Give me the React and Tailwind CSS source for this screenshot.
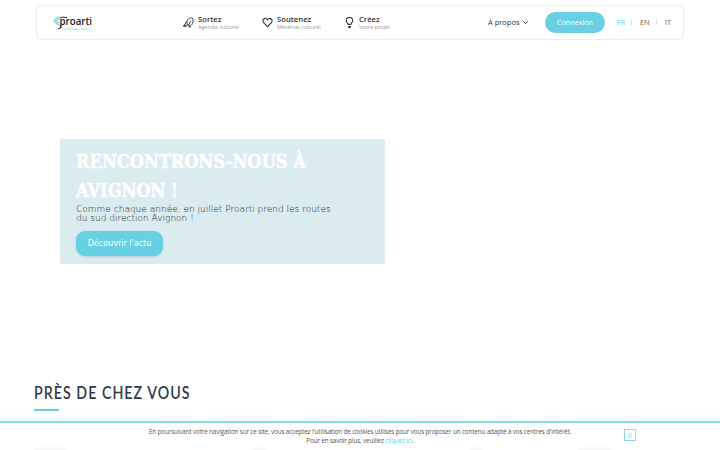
import React from 'react';

const menu = [
    { title: 'Sortez', subtitle: 'Agenda culturel', icon: RocketIcon, width: 'w-[79px]' },
    { title: 'Soutenez', subtitle: 'Mécénat culturel', icon: HeartIcon, width: 'w-[82px]' },
    { title: 'Créez', subtitle: 'Votre projet', icon: BulbIcon, width: 'w-[60px]' },
];

function RocketIcon() {
    return (
        <svg className="mt-[2px] h-[11px] w-[11px] shrink-0" viewBox="0 0 24 24" fill="none" stroke="#333" strokeWidth="2">
            <path d="M9 16C7 8 11 2 20 2c4 5 2 13-4 18l-7-4ZM9 8 1 20l8-3M16 20l-1 3-4-5M12 18l5-10M1 20l7 1" />
        </svg>
    );
}

function HeartIcon() {
    return (
        <svg className="mt-[2px] h-[11px] w-[11px] shrink-0" viewBox="0 0 24 24" fill="none" stroke="#333" strokeWidth="2.5">
            <path d="M12 21 4 13c-6-7 3-14 8-7 5-7 14 0 8 7l-8 8Z" />
        </svg>
    );
}

function BulbIcon() {
    return (
        <svg className="mt-[2px] h-[12px] w-[11px] shrink-0" viewBox="0 0 24 24" fill="none" stroke="#333" strokeWidth="2.3">
            <path d="M9 15c0-3-4-4-4-8a7 7 0 0 1 14 0c0 4-4 5-4 8H9Z" />
            <path d="M9 20h6M10 22h4" strokeWidth="2.5" />
        </svg>
    );
}

function Logo() {
    return (
        <svg className="h-[20px] w-[42px] overflow-visible" viewBox="0 0 42 20">
            <path d="M7 3 2 5 0 8l4 4 3 1-1-4-2-1 3-2Z" fill="#67d0e3" opacity="0.7" />
            <text x="6.500" y="12" fontFamily="Open Sans, sans-serif" fontSize="10.500" fontWeight="600" fill="#222" textLength="32.500" lengthAdjust="spacingAndGlyphs">proarti</text>
            <path d="M7 5Q9 3.500 14 4.500M5 16q3 0 3-4" stroke="#222" strokeWidth="1" fill="none" />
            <text x="9" y="16.500" fontFamily="Open Sans, sans-serif" fontSize="2.700" fill="#67d0e3" textLength="29">l'accélérateur culturel</text>
        </svg>
    );
}

function App() {
    return (
        <div className="flex h-[450px] w-[720px] flex-col overflow-hidden bg-white font-['Open_Sans',sans-serif] text-[#333]">
            <header className="ml-[36px] mt-[5px] flex h-[35px] w-[648px] shrink-0 items-center rounded-[5px] border border-[#ededed]">
                <div className="ml-[16px] w-[130px]"><Logo /></div>
                <nav className="flex w-[305px]">
                    {menu.map(({ title, subtitle, icon: Icon, width }) => (
                        <a key={title} className={`flex shrink-0 gap-[4px] ${width}`}>
                            <Icon />
                            <span className="whitespace-nowrap">
                                <b className="block text-[7.7px] font-semibold leading-[8px]">{title}</b>
                                <span className="block text-[5.6px] leading-[8px] text-[#999]">{subtitle}</span>
                            </span>
                        </a>
                    ))}
                </nav>
                <a className="w-[35px] whitespace-nowrap text-[7.5px]">À propos</a>
                <svg className="mr-[17px] h-[5px] w-[5px]" viewBox="0 0 10 10" fill="none" stroke="#333" strokeWidth="2"><path d="m1 3 4 4 4-4" /></svg>
                <button className="h-[21px] w-[60px] rounded-full bg-[#67d0e3] text-[7.2px] text-white">Connexion</button>
                <div className="ml-[12px] flex items-center text-[7.4px] text-[#666]">
                    <span className="w-[14px] text-[#67d0e3]">FR</span>
                    <span className="h-[6px] w-[9px] border-l border-[#ddd]" />
                    <span className="w-[16px]">EN</span>
                    <span className="h-[6px] w-[9px] border-l border-[#ddd]" />
                    <span>IT</span>
                </div>
            </header>

            <section className="ml-[60px] mt-[99px] h-[125px] w-[325px] shrink-0 rounded-[2px] bg-[#daecf0] pl-[16px] pt-[8px]">
                <h1 className="origin-left scale-x-[0.856] whitespace-nowrap font-['Roboto_Slab','DejaVu_Serif',serif] text-[19px] font-bold leading-[29px] text-white [-webkit-text-stroke:0.5px_white]">
                    RENCONTRONS-NOUS À<br />AVIGNON !
                </h1>
                <p className="whitespace-nowrap font-['DejaVu_Sans',sans-serif] text-[9px] font-extralight leading-[9px] text-[#222]">
                    Comme chaque année, en juillet Proarti prend les routes<br />du sud direction Avignon !
                </p>
                <button className="mt-[8px] h-[25px] w-[87px] rounded-[9px] bg-[#67d0e3] font-['DejaVu_Sans',sans-serif] text-[8px] text-white shadow-sm">Découvrir l'actu</button>
            </section>

            <section className="ml-[34px] mt-[119px] h-[38px] shrink-0">
                <h2 className="origin-left scale-x-[0.87] whitespace-nowrap font-['Lato',sans-serif] text-[16.4px] font-semibold leading-[20px] tracking-[1.15px] text-[#333b4b]">PRÈS DE CHEZ VOUS</h2>
                <div className="mt-[6px] h-[2px] w-[25px] bg-[#67d0e3]" />
            </section>

            <footer className="flex h-[26px] shrink-0 border-t-2 border-[#84dcea] pt-[4px]">
                <p className="ml-[149px] w-[422px] whitespace-nowrap text-center text-[6.3px] leading-[9px] tracking-[-0.13px] text-[#555]">
                    En poursuivant votre navigation sur ce site, vous acceptez l'utilisation de cookies utilisés pour vous proposer un contenu adapté à vos centres d'intérêt.<br />
                    Pour en savoir plus, veuillez <a className="text-[#67d0e3]">cliquez ici</a>.
                </p>
                <button className="ml-[53px] mt-[2px] flex h-[12px] w-[12px] items-center justify-center border border-[#84dcea] pt-px text-[7.8px] leading-none text-[#67d0e3]">X</button>
            </footer>

            {/* filters showing faintly behind the cookie bar */}
            <div className="flex h-[3px] shrink-0 pl-[34px]">
                <span className="mr-[185px] w-[33px] bg-[#f9f9f9]" />
                <span className="mr-[203px] w-[14px] bg-[#f9f9f9]" />
                <span className="mr-[94px] w-[14px] bg-[#f9f9f9]" />
                <span className="w-[35px] bg-[#f9f9f9]" />
            </div>
        </div>
    );
}

export default App;
